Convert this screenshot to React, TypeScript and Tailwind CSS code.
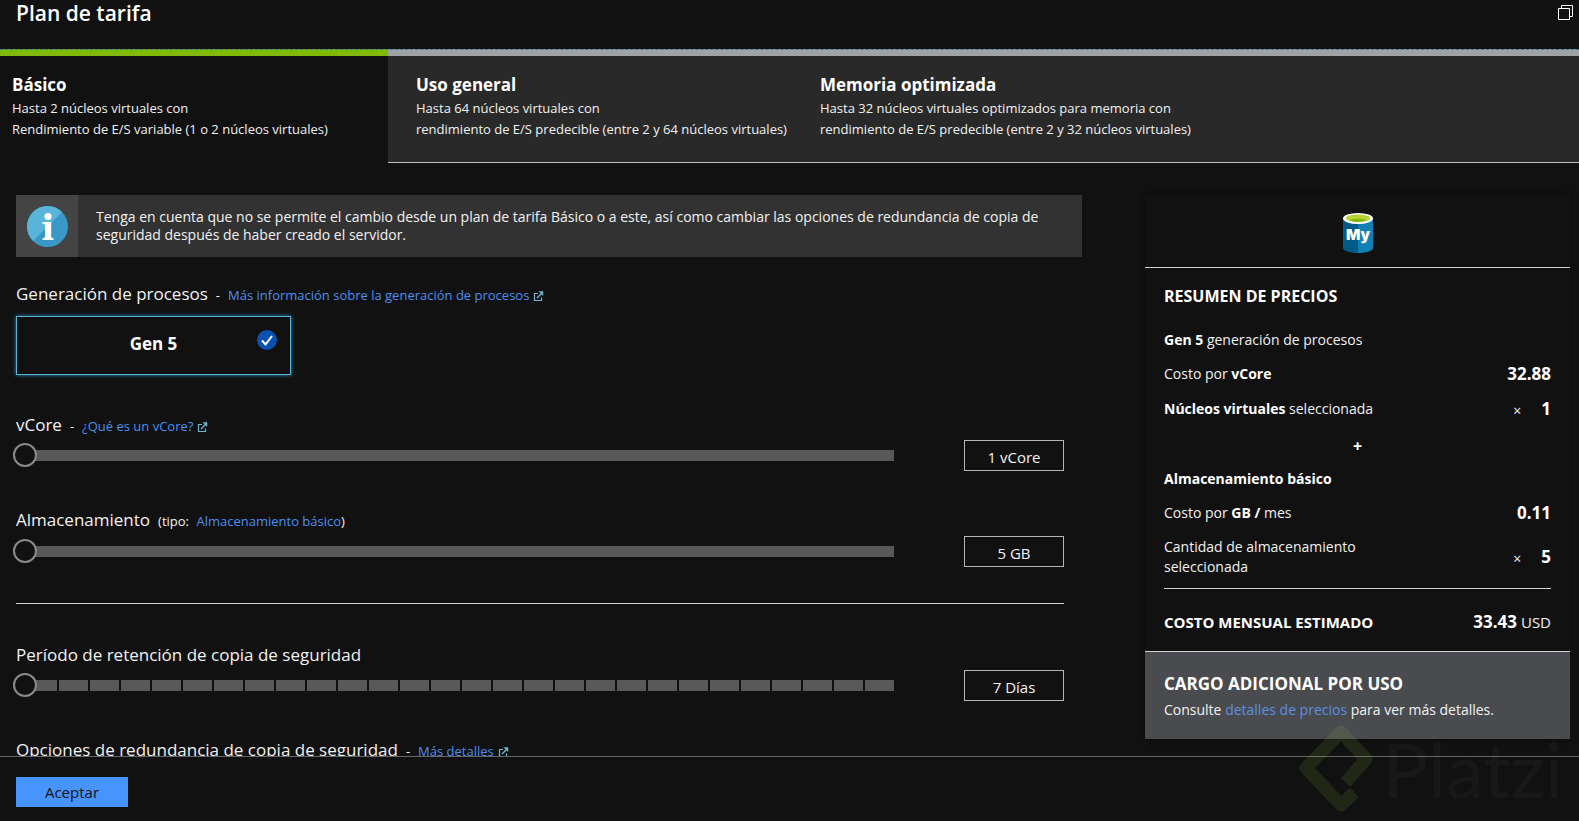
import type { ReactNode } from "react";

const tiers = [
  {
    name: "Básico",
    lines: ["Hasta 2 núcleos virtuales con", "Rendimiento de E/S variable (1 o 2 núcleos virtuales)"],
    tab: "w-[388px] pl-3 border-t-[#7fba00] border-b-transparent",
  },
  {
    name: "Uso general",
    lines: [
      "Hasta 64 núcleos virtuales con",
      "rendimiento de E/S predecible (entre 2 y 64 núcleos virtuales)",
    ],
    tab: "w-[404px] pl-7 bg-[#292929] border-t-[#a0a3a6] border-b-[#c0c0c0]",
  },
  {
    name: "Memoria optimizada",
    lines: [
      "Hasta 32 núcleos virtuales optimizados para memoria con",
      "rendimiento de E/S predecible (entre 2 y 32 núcleos virtuales)",
    ],
    tab: "flex-1 pl-7 bg-[#292929] border-t-[#a0a3a6] border-b-[#c0c0c0]",
  },
];

const ExternalIcon = () => (
  <svg width="11" height="11" viewBox="0 1 11 11" fill="none" stroke="#6fb5cf" className="ml-1 inline-block">
    <path d="M5 3.500H1.500v7h7V7.500" strokeWidth="1.200" />
    <path d="M4 8 9 3" strokeWidth="1.500" />
    <path d="M6 1.500h4v4Z" fill="#6fb5cf" strokeWidth=".5" />
  </svg>
);

const InfoIcon = () => (
  <svg width="41" height="41" viewBox="0 0 41 41">
    <circle cx="20.5" cy="20.5" r="20.5" fill="#3999c6" />
    <path d="M6 35A20.5 20.5 0 0 1 35 6Z" fill="#59b4d9" />
    <circle cx="21" cy="10.5" r="3.6" fill="#fff" />
    <path d="M15.5 16h8.7v15.5l2.3.8V34H15.6v-1.7l2.4-.8V18.4l-2.5-.7Z" fill="#fff" />
  </svg>
);

const MySqlIcon = () => (
  <svg width="30" height="40" viewBox="0 0 30 40">
    <path d="M0 5v30c0 2.8 6.7 5 15 5V5Z" fill="#005b87" />
    <path d="M15 5v35c8.300 0 15-2.200 15-5V5Z" fill="#1380b5" />
    <ellipse cx="15" cy="5.500" rx="15" ry="5.500" fill="#fff" />
    <ellipse cx="15" cy="5.200" rx="12" ry="3.700" fill="#b8d432" />
    <path d="M6 7.500c2-1.100 5.300-1.700 9-1.700s7 .6 9 1.700c-2.200.9-5.400 1.400-9 1.400s-6.800-.5-9-1.400Z" fill="#7fba00" />
    <text x="15" y="27" textAnchor="middle" fontSize="15" fontWeight="900" fontFamily="Inter, sans-serif" fill="#fff">
      My
    </text>
  </svg>
);

const Heading = ({ children, extra }: { children: ReactNode; extra?: ReactNode }) => (
  <div className="flex items-baseline gap-2 text-[13px] leading-6">
    <h2 className="text-[17px] leading-6">{children}</h2>
    {extra}
  </div>
);

type SliderProps = { label: string; min: number; max: number; value: number; output: string; stepped?: boolean };

const Slider = ({ label, min, max, value, output, stepped }: SliderProps) => (
  <div className="flex items-center mr-[18px]">
    <div className="relative flex-1 -ml-[3px] flex">
      <input
        type="range"
        aria-label={label}
        min={min}
        max={max}
        defaultValue={value}
        className="w-full h-6 appearance-none bg-transparent [&::-webkit-slider-runnable-track]:h-[11px] [&::-webkit-slider-runnable-track]:rounded-l-full [&::-webkit-slider-runnable-track]:bg-[#595959] [&::-webkit-slider-thumb]:appearance-none [&::-webkit-slider-thumb]:size-6 [&::-webkit-slider-thumb]:-mt-[7px] [&::-webkit-slider-thumb]:rounded-full [&::-webkit-slider-thumb]:border-2 [&::-webkit-slider-thumb]:border-[#8a8a8a] [&::-webkit-slider-thumb]:bg-[#111]"
      />
      {/* one gap for every step after the first */}
      {stepped && (
        <div className="absolute inset-y-0 left-[15px] right-0 flex pointer-events-none">
          {Array.from({ length: max - min }, (_, i) => (
            <div key={i} className={i === max - min - 1 ? "flex-1" : "flex-1 border-r-2 border-[#111]"} />
          ))}
        </div>
      )}
    </div>
    <output className="ml-[70px] w-[100px] h-[31px] border border-[#b5b5b5] text-center text-[15px] leading-8">
      {output}
    </output>
  </div>
);

const PriceRow = ({ label, times, value }: { label: ReactNode; times?: boolean; value: string }) => (
  <div className="flex items-center justify-between">
    <span className="w-[230px]">{label}</span>
    <span className="flex items-center">
      {times && <span className="mt-1 leading-4">×</span>}
      <span className="ml-5 text-[17px] font-bold text-white">{value}</span>
    </span>
  </div>
);

export default function App() {
  return (
    <div className="h-screen flex flex-col overflow-hidden bg-[#111] text-[#f2f2f2] font-['Open_Sans','Noto_Sans',sans-serif]">
      <header className="flex justify-between h-[49px] pl-4 pr-[6px] shrink-0">
        <h1 className="text-[21px] leading-[27px] font-semibold text-white">Plan de tarifa</h1>
        <button aria-label="Restaurar" className="self-start mt-[5px]">
          <svg width="15" height="15" viewBox="0 0 15 15" fill="none" stroke="#fff">
            <path d="M.5 3.500h11v11H.5ZM3.500 3.500V.5h11v11h-3" />
          </svg>
        </button>
      </header>

      <div className="relative flex shrink-0">
        {tiers.map((tier) => (
          <button
            key={tier.name}
            className={`flex flex-col items-start h-[114px] pt-4 border-t-[7px] border-b text-left ${tier.tab}`}
          >
            <div className="text-[17px] leading-[26px] font-bold text-white">{tier.name}</div>
            {tier.lines.map((line) => (
              <div key={line} className="text-[13px] leading-[21px] whitespace-nowrap">
                {line}
              </div>
            ))}
          </button>
        ))}
        <div className="absolute inset-x-0 top-0 border-t border-dashed border-[#3f7f99]" />
      </div>

      <main className="flex-1 min-h-0 overflow-y-auto [scrollbar-width:none] flex items-start pl-4 pr-[9px] pt-8">
        <section className="flex-1">
          <div className="flex h-[62px] bg-[#323232]">
            <div className="w-[62px] flex items-center justify-center bg-[#444]">
              <InfoIcon />
            </div>
            <p className="flex-1 self-center pl-[18px] pr-4 text-sm leading-[18px]">
              Tenga en cuenta que no se permite el cambio desde un plan de tarifa Básico o a este, así como cambiar las
              opciones de redundancia de copia de seguridad después de haber creado el servidor.
            </p>
          </div>

          <div className="mt-[25px]">
            <Heading
              extra={
                <>
                  <span>-</span>
                  <a href="#generacion" className="text-[#4b8ff0]">
                    Más información sobre la generación de procesos
                    <ExternalIcon />
                  </a>
                </>
              }
            >
              Generación de procesos
            </Heading>
            <button className="relative mt-[9px] block w-[275px] h-[59px] pb-1 border border-[#59b4d9] shadow-[0_0_4px_#2f8ab5] text-[17px] font-bold text-white">
              Gen 5
              <svg width="20" height="20" viewBox="0 0 20 20" className="absolute right-[13px] top-[13px]">
                <circle cx="10" cy="10" r="10" fill="#0a51b0" />
                <path d="m5 10.500 3.500 4 6.500-8.500" fill="none" stroke="#fff" strokeWidth="2" />
              </svg>
            </button>
          </div>

          <div className="mt-[38px]">
            <Heading
              extra={
                <>
                  <span>-</span>
                  <a href="#vcore" className="text-[#4b8ff0]">
                    ¿Qué es un vCore?
                    <ExternalIcon />
                  </a>
                </>
              }
            >
              vCore
            </Heading>
            <div className="mt-[2px]">
              <Slider label="vCore" min={1} max={2} value={1} output="1 vCore" />
            </div>
          </div>

          <div className="mt-[37px]">
            <Heading
              extra={
                <span>
                  (tipo:{" "}
                  <a href="#almacenamiento" className="ml-1 text-[#4b8ff0]">
                    Almacenamiento básico
                  </a>
                  )
                </span>
              }
            >
              Almacenamiento
            </Heading>
            <div className="mt-[3px]">
              <Slider label="Almacenamiento" min={5} max={1024} value={5} output="5 GB" />
            </div>
          </div>

          <hr className="mt-9 mr-[18px] border-[#d0d0d0]" />

          <div className="mt-[39px]">
            <Heading>Período de retención de copia de seguridad</Heading>
            <div className="mt-[3px]">
              <Slider label="Período de retención" min={7} max={35} value={7} output="7 Días" stepped />
            </div>
          </div>

          <div className="mt-[37px] pb-6">
            <Heading
              extra={
                <>
                  <span>-</span>
                  <a href="#redundancia" className="text-[#4b8ff0]">
                    Más detalles
                    <ExternalIcon />
                  </a>
                </>
              }
            >
              Opciones de redundancia de copia de seguridad
            </Heading>
          </div>
        </section>

        <aside className="w-[425px] ml-[63px] shadow-[0_0_6px_#0a0a0a] text-sm leading-5">
          <div className="flex h-[72px] pt-1 items-center justify-center">
            <MySqlIcon />
          </div>
          <div className="border-y border-[#d0d0d0] px-[19px] pt-[18px] pb-[19px]">
            <h2 className="text-base leading-5 font-bold text-white">RESUMEN DE PRECIOS</h2>
            <p className="mt-6">
              <b className="text-white">Gen 5</b> generación de procesos
            </p>
            <div className="mt-[14px]">
              <PriceRow label={<>Costo por <b className="text-white">vCore</b></>} value="32.88" />
            </div>
            <div className="mt-[15px]">
              <PriceRow label={<><b className="text-white">Núcleos virtuales</b> seleccionada</>} times value="1" />
            </div>
            <div className="mt-[17px] text-center text-base leading-5 font-bold text-white">+</div>
            <p className="mt-[13px] font-bold text-white">Almacenamiento básico</p>
            <div className="mt-[14px]">
              <PriceRow label={<>Costo por <b className="text-white">GB /</b> mes</>} value="0.11" />
            </div>
            <div className="mt-[14px]">
              <PriceRow label="Cantidad de almacenamiento seleccionada" times value="5" />
            </div>
            <hr className="mt-[11px] border-[#d0d0d0]" />
            <div className="mt-[23px] flex items-center justify-between">
              <b className="text-[15px] leading-5 text-white">COSTO MENSUAL ESTIMADO</b>
              <span className="text-[15px] leading-5">
                <b className="text-[17px] text-white">33.43</b> USD
              </span>
            </div>
          </div>
          <div className="bg-[#494b4f] h-[87px] px-[19px] pt-5">
            <h2 className="text-[17px] leading-6 font-bold text-white">CARGO ADICIONAL POR USO</h2>
            <p className="mt-1">
              Consulte{" "}
              <a href="#precios" className="text-[#5b8fe0]">
                detalles de precios
              </a>{" "}
              para ver más detalles.
            </p>
          </div>
        </aside>
      </main>

      <footer className="shrink-0 border-t border-[#666] pl-4 pt-5 pb-[14px]">
        <button className="w-28 h-[30px] bg-[#4894fe] text-[15px] text-[#111]">Aceptar</button>
      </footer>

      <div className="fixed right-4 bottom-2 flex items-center pointer-events-none">
        <svg width="74" height="88" viewBox="0 0 74 88" fill="none" stroke="#98ca3f" strokeOpacity=".12" strokeWidth="13" strokeLinejoin="round">
          <path d="M46.500 57.500 67 34 42 7 7 43 42 80 55.500 67.500" />
        </svg>
        <span className="ml-[10px] font-['Lato'] text-[76px] leading-none text-white/3">Platzi</span>
      </div>
    </div>
  );
}
